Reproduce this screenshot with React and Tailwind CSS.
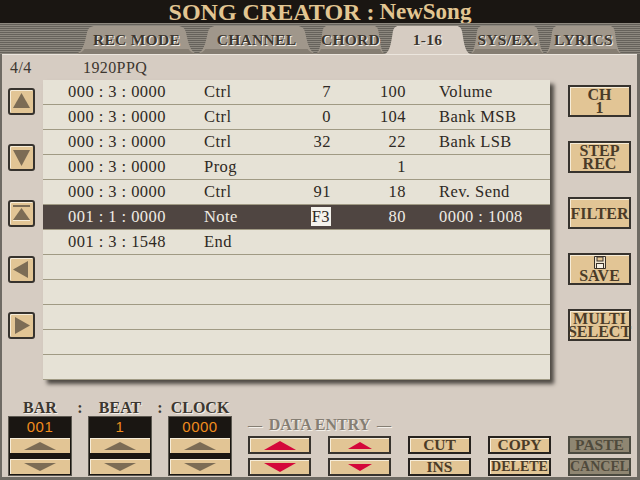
const serif = { fontFamily: '"Liberation Serif", serif' };

const tabs = [
  { label: "REC MODE", w: "w-[121px]" },
  { label: "CHANNEL", w: "w-[119px]" },
  { label: "CHORD", w: "w-[69px]" },
  { label: "1-16", w: "w-[85px]", active: true },
  { label: "SYS/EX.", w: "w-[75px]" },
  { label: "LYRICS", w: "w-[77px]" },
];

const rows = [
  ["000 : 3 : 0000", "Ctrl", "7", "100", "Volume"],
  ["000 : 3 : 0000", "Ctrl", "0", "104", "Bank MSB"],
  ["000 : 3 : 0000", "Ctrl", "32", "22", "Bank LSB"],
  ["000 : 3 : 0000", "Prog", "", "1", ""],
  ["000 : 3 : 0000", "Ctrl", "91", "18", "Rev. Send"],
  ["001 : 1 : 0000", "Note", "F3", "80", "0000 : 1008"],
  ["001 : 3 : 1548", "End", "", "", ""],
  ["", "", "", "", ""],
  ["", "", "", "", ""],
  ["", "", "", "", ""],
  ["", "", "", "", ""],
  ["", "", "", "", ""],
];

function Tab({ label, w, active }) {
  return (
    <div className={`relative h-[29px] ${w} flex items-center justify-center ${active ? "z-10" : ""}`}>
      <svg className="absolute inset-0 w-full h-full" viewBox="0 0 100 29" preserveAspectRatio="none">
        <path
          d="M0 29 C5 27 7 20 9 8 C10 3 12 1 16 1 L84 1 C88 1 90 3 91 8 C93 20 95 27 100 29 Z"
          fill={active ? "#d6ccc2" : "#a0978b"}
        />
        {!active && <path d="M0 29 C4 28 6 26 7 24 L93 24 C94 26 96 28 100 29 Z" fill="#857d72" />}
      </svg>
      <span className="relative text-[15.5px] font-bold text-[#3d3730] [text-shadow:1px_1px_0_#f4f0ea] whitespace-nowrap tracking-[0.3px]">
        {label}
      </span>
    </div>
  );
}

function SideArrow({ dir }) {
  return (
    <button className="w-[27px] h-[27px] rounded-[3px] border-2 border-[#37332e] bg-[#e2c595] flex items-center justify-center shadow-[inset_1px_1px_0_#f6ecd8]">
      <svg width="19" height="19" viewBox="0 0 19 19">
        {dir === "up" && <polygon points="9.5,1 18,16 1,16" fill="#7c6c55" />}
        {dir === "down" && <polygon points="1,2 18,2 9.5,18" fill="#7c6c55" />}
        {dir === "top" && (
          <>
            <rect x="1" y="1" width="17" height="2" fill="#7c6c55" />
            <polygon points="9.5,4 18,16 1,16" fill="#7c6c55" />
            <rect x="1" y="16" width="17" height="1" fill="#f6ecd8" />
          </>
        )}
        {dir === "left" && <polygon points="1,9.5 16,1 16,18" fill="#7c6c55" />}
        {dir === "right" && <polygon points="18,9.5 3,1 3,18" fill="#7c6c55" />}
      </svg>
    </button>
  );
}

function SideButton({ lines, save }) {
  return (
    <button className="w-[63px] h-[32px] border-2 border-[#37332e] bg-[#e2c595] shadow-[inset_1px_1px_0_#f6ecd8] flex flex-col items-center justify-center text-[#4a3b28] font-bold text-[16px] leading-[13px] whitespace-nowrap">
      {save && (
        <svg width="14" height="13" viewBox="0 0 14 13" className="-mt-[1px]">
          <path d="M1.5 0.5 H12.5 V12.5 H1.5 Z" fill="#efe6d2" stroke="#3a3128" strokeWidth="1" />
          <rect x="4" y="1" width="6" height="4" fill="#e2c595" stroke="#3a3128" />
          <rect x="3.5" y="7.5" width="7" height="5" fill="#f6f1e4" stroke="#3a3128" />
        </svg>
      )}
      {lines.map((l) => (
        <span key={l}>{l}</span>
      ))}
    </button>
  );
}

function SmallTriangle({ up, color = "#7c6c55", w = 32, h = 8 }) {
  return (
    <svg width={w} height={h} viewBox={`0 0 ${w} ${h}`}>
      <polygon points={up ? `${w / 2},0 ${w},${h} 0,${h}` : `0,0 ${w},0 ${w / 2},${h}`} fill={color} />
    </svg>
  );
}

function Stepper({ label, value }) {
  return (
    <div className="w-[64px] flex flex-col items-center">
      <div className="text-[16px] leading-[16px] font-bold text-[#3d3730] [text-shadow:1px_1px_0_#f4f0ea] whitespace-nowrap">{label}</div>
      <div className="w-full h-[60px] bg-[#1a1612] border border-[#5c5850] flex flex-col px-[1px] items-stretch">
        <div
          className="h-[21px] flex items-center justify-center text-[15px] text-[#f08c1e] tracking-[0.5px]"
          style={{ fontFamily: '"Liberation Sans", sans-serif' }}
        >
          {value}
        </div>
        <div className="h-[15px] bg-[#e2c595] flex items-center justify-center shadow-[inset_1px_1px_0_#f6ecd8]">
          <SmallTriangle up />
        </div>
        <div className="h-[6px]" />
        <div className="h-[15px] bg-[#e2c595] flex items-center justify-center shadow-[inset_1px_1px_0_#f6ecd8]">
          <SmallTriangle />
        </div>
      </div>
    </div>
  );
}

function EntryButton({ up, w, h }) {
  return (
    <button className="w-[63px] h-[18px] border-2 border-[#37332e] bg-[#e2c595] flex items-center justify-center shadow-[inset_1px_1px_0_#f6ecd8]">
      <SmallTriangle up={up} color="#d4073a" w={w} h={h} />
    </button>
  );
}

function EditButton({ label, disabled }) {
  return (
    <button
      className={`w-[63px] h-[18px] border-2 flex items-center justify-center font-bold leading-none whitespace-nowrap ${
        label.length > 5 ? "text-[14px]" : "text-[15.5px]"
      } ${
        disabled
          ? "border-[#4b4a40] bg-[#8f8672] text-[#4f4a3c]"
          : "border-[#26221e] bg-[#e2c595] text-[#4a3b28] shadow-[inset_1px_1px_0_#f6ecd8]"
      }`}
    >
      {label}
    </button>
  );
}

function ColonGap() {
  return (
    <div className="w-[16px] h-[76px] text-center text-[16px] leading-[16px] font-bold text-[#3d3730]">:</div>
  );
}

export default function App() {
  return (
    <div className="w-[640px] h-[480px] overflow-hidden flex flex-col bg-[#6f6b64]" style={serif}>
      {/* Title */}
      <div className="h-[23px] bg-[#1a1612] flex items-center justify-center text-[#e2c692] whitespace-nowrap">
        <span className="text-[24px] font-bold leading-[22px]">SONG CREATOR :</span>
        <span className="text-[23px] font-bold leading-[22px] ml-[5px]">NewSong</span>
      </div>

      {/* Tabs */}
      <div className="h-[31px] flex items-end pl-[76px] bg-[repeating-linear-gradient(180deg,#8d887f_0px,#8d887f_1px,#66625b_1px,#66625b_2px)]">
        {tabs.map((t) => (
          <Tab key={t.label} {...t} />
        ))}
      </div>

      {/* Panel */}
      <div className="flex-1 ml-[2px] mb-[3px] mr-[3px] bg-[#d6ccc2] flex flex-col border-t border-[#ece6de]">
        <div className="h-[25px] flex items-center text-[#3d3730] text-[16px] tracking-[0.4px]">
          <span className="ml-[8px] w-[73px]">4/4</span>
          <span>1920PPQ</span>
        </div>

        <div className="flex h-[300px]">
          <div className="w-[41px] pl-[6px] pt-[8px] flex flex-col gap-[29px]">
            <SideArrow dir="up" />
            <SideArrow dir="down" />
            <SideArrow dir="top" />
            <SideArrow dir="left" />
            <SideArrow dir="right" />
          </div>

          <div className="w-[507px] h-[300px] bg-[#e6e2d6] shadow-[4px_4px_4px_#4f4a44] flex flex-col">
            {rows.map((r, i) => {
              const selected = i === 5;
              return (
                <div
                  key={i}
                  className={`h-[25px] shrink-0 grid grid-cols-[136px_80px_47px_75px_1fr] items-center pl-[25px] text-[16.5px] tracking-[0.45px] border-b border-[#a09a84] ${
                    selected ? "bg-[#4f4541] text-[#f0ece4]" : "text-[#2e2924]"
                  }`}
                >
                  <span className="whitespace-pre">{r[0]}</span>
                  <span>{r[1]}</span>
                  <span className="text-right">
                    {selected ? <span className="bg-[#f4f2ec] text-[#2e2924] px-[1px]">{r[2]}</span> : r[2]}
                  </span>
                  <span className="text-right">{r[3]}</span>
                  <span className="pl-[33px] whitespace-pre">{r[4]}</span>
                </div>
              );
            })}
          </div>

          <div className="ml-[18px] pt-[5px] flex flex-col gap-[24px]">
            <SideButton lines={["CH", "1"]} />
            <SideButton lines={["STEP", "REC"]} />
            <SideButton lines={["FILTER"]} />
            <SideButton lines={["SAVE"]} save />
            <SideButton lines={["MULTI", "SELECT"]} />
          </div>
        </div>

        {/* Bottom controls */}
        <div className="flex-1 flex items-end pl-[6px] pb-[1px]">
          <Stepper label="BAR" value="001" />
          <ColonGap />
          <Stepper label="BEAT" value="1" />
          <ColonGap />
          <Stepper label="CLOCK" value="0000" />

          <div className="ml-[16px] w-[143px] flex flex-col">
            <div className="h-[20px] flex items-center justify-between text-[16px] font-bold text-[#857e73] [text-shadow:1px_1px_0_#f4f0ea] whitespace-nowrap">
              <span className="text-[14px]">—</span>
              <span>DATA ENTRY</span>
              <span className="text-[14px]">—</span>
            </div>
            <div className="mt-[1px] grid grid-cols-2 gap-x-[17px] gap-y-[4px]">
              <EntryButton up w={32} h={9} />
              <EntryButton up w={24} h={7} />
              <EntryButton w={32} h={9} />
              <EntryButton w={24} h={7} />
            </div>
          </div>

          <div className="ml-[17px] grid grid-cols-3 gap-x-[17px] gap-y-[4px]">
            <EditButton label="CUT" />
            <EditButton label="COPY" />
            <EditButton label="PASTE" disabled />
            <EditButton label="INS" />
            <EditButton label="DELETE" />
            <EditButton label="CANCEL" disabled />
          </div>
        </div>
      </div>
    </div>
  );
}
